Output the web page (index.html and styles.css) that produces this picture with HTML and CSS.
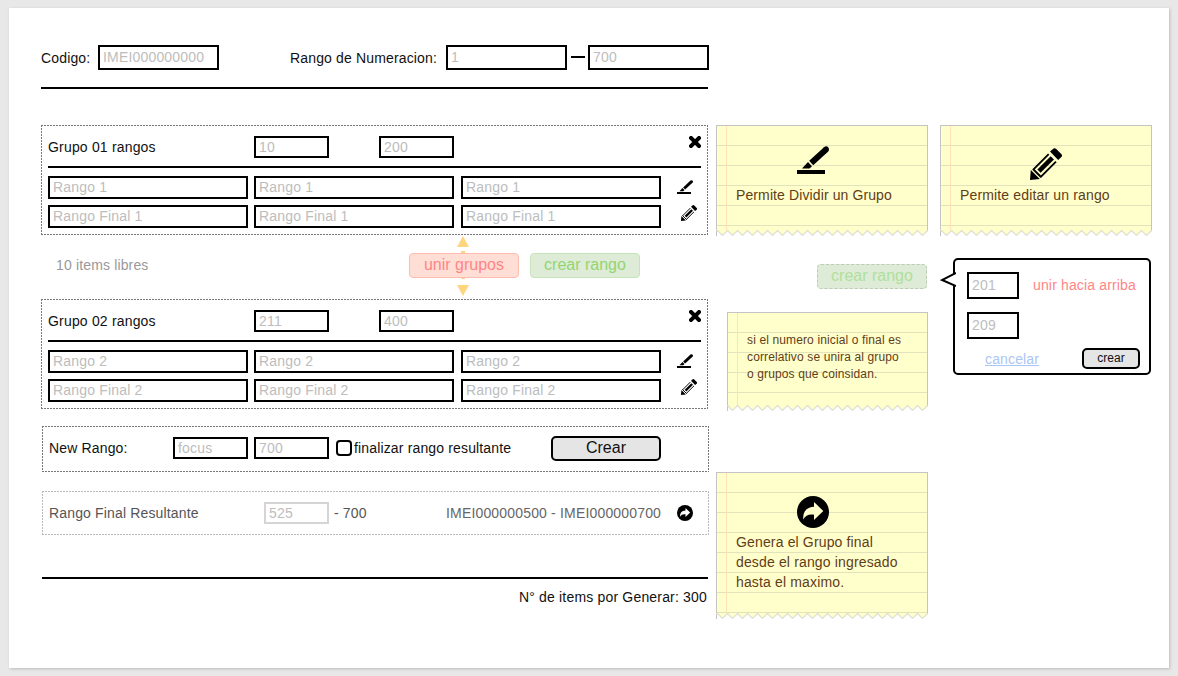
FILE: index.html
```html
<!DOCTYPE html>
<html lang="es">
<head>
<meta charset="utf-8">
<title>Rangos</title>
<link rel="stylesheet" href="styles.css">
</head>
<body>
<svg class="defs" width="0" height="0">
  <symbol id="times" viewBox="0 0 12 12"><path d="M2 2 10 10M10 2 2 10" stroke="#000" stroke-width="4" stroke-linecap="square"/></symbol>
  <symbol id="marker" viewBox="0 0 32 28"><path d="M0 24h28v4H0z"/><path d="M5 22.500 11 16l4 4.200-2.500 2.300z"/><path d="M12.200 14.800 27 1.200q2.600-1.800 4.300.200 1.500 2.200-.300 4.300L16.200 19.200z"/></symbol>
  <symbol id="pencil" viewBox="0 0 32 32"><path d="M0 32 .8 22 9.800 31z"/><path d="M20 3.500 23.500.500q1.300-.800 2.500.200l5.500 5.500q1 1.300.100 2.600L28.200 12z"/><path d="M3 21.800 18.700 6.100M10.300 29.300 26 13.600M3 21 11 29" stroke="#000" stroke-width="1.900"/><path d="M9 23.200 22.300 9.900" stroke="#000" stroke-width="4.600"/></symbol>
  <symbol id="share" viewBox="0 0 32 32"><circle cx="16" cy="16" r="16"/><path fill="currentColor" d="M17 6 26.300 15 17 24V18.700C11.500 18 8.500 19.500 6.300 23.500 5.500 16 9.500 11 17 10.800z"/></symbol>
  <pattern id="zig" x="1.500" y="0" width="10" height="6" patternUnits="userSpaceOnUse"><path class="paper" d="M0 0V.5l5 5 5-5V0z"/><path class="tear" d="M-1-.5 5 5.500 11-.5"/></pattern>
</svg>
<div class="page">
  <main class="main">
    <header class="top">
      <span class="label-code">Codigo:</span><span class="field tall">IMEI000000000</span>
      <span class="label-range">Rango de Numeracion:</span><span class="field tall">1</span><i class="dash"></i><span class="field tall">700</span>
    </header>

    <section class="group dashed">
      <div class="group-head"><span class="name">Grupo 01 rangos</span><span class="field">10</span><span class="field second">200</span><svg class="close"><use href="#times"/></svg></div>
      <div class="group-body">
        <span class="field">Rango 1</span><span class="field">Rango 1</span><span class="field">Rango 1</span><svg class="i-marker"><use href="#marker"/></svg>
        <span class="field">Rango Final 1</span><span class="field">Rango Final 1</span><span class="field">Rango Final 1</span><svg class="i-pencil"><use href="#pencil"/></svg>
      </div>
    </section>

    <div class="between">
      <span class="free">10 items libres</span>
      <span class="join"><svg class="arrow" viewBox="0 0 12 60"><path d="M6 0 12 11H0zM4 15h4v28H4zM0 49h12L6 60z"/></svg><span class="btn red">unir grupos</span></span>
      <span class="btn green">crear rango</span>
    </div>

    <section class="group dashed">
      <div class="group-head"><span class="name">Grupo 02 rangos</span><span class="field">211</span><span class="field second">400</span><svg class="close"><use href="#times"/></svg></div>
      <div class="group-body">
        <span class="field">Rango 2</span><span class="field">Rango 2</span><span class="field">Rango 2</span><svg class="i-marker"><use href="#marker"/></svg>
        <span class="field">Rango Final 2</span><span class="field">Rango Final 2</span><span class="field">Rango Final 2</span><svg class="i-pencil"><use href="#pencil"/></svg>
      </div>
    </section>

    <section class="new dashed">
      <span class="new-label">New Rango:</span><span class="field">focus</span><span class="field">700</span><i class="check"></i><span class="check-label">finalizar rango resultante</span><span class="btn dark">Crear</span>
    </section>

    <section class="result dashed">
      <span class="result-label">Rango Final Resultante</span><span class="field">525</span><span class="until">- 700</span><span class="codes">IMEI000000500 - IMEI000000700</span><svg class="i-share"><use href="#share"/></svg>
    </section>

    <footer class="total">N° de items por Generar: 300</footer>
  </main>

  <aside class="side">
    <div class="note n-split"><svg class="big b-marker"><use href="#marker"/></svg><p>Permite Dividir un Grupo</p><svg class="edge" viewBox="0 0 212 6"><rect width="212" height="6" fill="url(#zig)"/></svg></div>
    <span class="btn green faded">crear rango</span>
    <div class="note n-small"><p>si el numero inicial o final es<br>correlativo se unira al grupo<br>o grupos que coinsidan.</p><svg class="edge" viewBox="11 0 201 6"><rect width="212" height="6" fill="url(#zig)"/></svg></div>
    <div class="note n-share"><svg class="big b-share"><use href="#share"/></svg><p>Genera el Grupo final<br>desde el rango ingresado<br>hasta el maximo.</p><svg class="edge" viewBox="0 0 212 6"><rect width="212" height="6" fill="url(#zig)"/></svg></div>
  </aside>

  <aside class="side last">
    <div class="note n-edit"><svg class="big b-pencil"><use href="#pencil"/></svg><p>Permite editar un rango</p><svg class="edge" viewBox="0 0 212 6"><rect width="212" height="6" fill="url(#zig)"/></svg></div>
    <div class="popover">
      <svg class="beak" viewBox="0 0 16 16"><path d="M16 1 2 8 16 14"/></svg>
      <div class="pop-row"><span class="field">201</span><span class="up">unir hacia arriba</span></div>
      <div class="pop-row"><span class="field">209</span></div>
      <div class="pop-actions"><a class="cancel">cancelar</a><span class="btn dark mini">crear</span></div>
    </div>
  </aside>
</div>
</body>
</html>
```
FILE: styles.css
```css
* { box-sizing: border-box; }
body { margin: 0; padding: 8px 9px; height: 676px; overflow: hidden; background: #e8e8e8; font: 14px/20px "Liberation Sans", Arial, sans-serif; letter-spacing: .15px; color: #111; }
svg { display: block; flex: none; }
p { margin: 0; }
.defs { position: absolute; }
.paper { fill: #ffffcc; }
.tear { fill: none; stroke: #c4c4c4; }
.page { display: flex; width: 1160px; height: 660px; padding: 37px 0 0 32px; background: #fff; box-shadow: 1px 1px 3px #bbb; white-space: nowrap; }
.main { width: 668px; margin-right: 7px; }

.field { display: block; flex: none; width: 75px; height: 22px; padding-left: 3px; border: 2px solid #000; background: #fff; color: #bdbdbd; line-height: 18px; letter-spacing: .18px; }
.field.tall { width: 121px; height: 25px; line-height: 21px; }
.top { display: flex; width: 667px; height: 44px; border-bottom: 2px solid #000; line-height: 26px; }
.top .tall:last-child { margin-right: -1px; }
.label-code { width: 57px; }
.label-range { width: 156px; margin-left: 71px; }
.dash { flex: none; width: 14px; height: 2px; margin: 11px 3px 0 4px; background: #000; }

.dashed {
  --c: #777;
  background:
    repeating-linear-gradient(90deg, var(--c) 0 2px, transparent 2px 3px) top / 100% 1px no-repeat,
    repeating-linear-gradient(90deg, var(--c) 0 2px, transparent 2px 3px) bottom / 100% 1px no-repeat,
    repeating-linear-gradient(var(--c) 0 2px, transparent 2px 3px) left / 1px 100% no-repeat,
    repeating-linear-gradient(var(--c) 0 2px, transparent 2px 3px) right / 1px 100% no-repeat;
}
.group { width: 667px; height: 110px; padding: 11px 7px 0; }
.top + .group { margin-top: 36px; }
.group-head { display: flex; height: 32px; border-bottom: 2px solid #000; }
.name { width: 206px; line-height: 22px; letter-spacing: .18px; }
.second { margin-left: 50px; }
.close { width: 12px; height: 12px; margin-left: auto; }
.group-body { display: grid; grid-template-columns: 206px 207px 200px 40px; row-gap: 6px; margin-top: 8px; }
.group-body .field { width: 200px; height: 23px; line-height: 19px; }
.i-marker { width: 16px; height: 14px; margin: 4px 0 0 16px; }
.i-pencil { width: 16px; height: 16px; margin-left: 20px; }

.between { display: flex; height: 64px; padding: 18px 0 0 15px; }
.free { width: 353px; line-height: 25px; color: #999; }
.join { position: relative; margin-right: 11px; }
.arrow { position: absolute; left: 48px; top: -17px; width: 12px; height: 60px; fill: #ffd580; }
.btn { display: block; position: relative; width: 110px; height: 25px; border: 1px solid; border-radius: 4px; text-align: center; font-size: 16px; line-height: 22px; letter-spacing: 0; }
.red { background: #ffded6; border-color: #ffbdb0; color: #ff8585; }
.green { background: #deecd7; border-color: #c6e4b9; color: #93d572; }

.new { display: flex; width: 667px; height: 46px; margin: 17px 0 0 1px; padding: 11px 7px 0; line-height: 22px; }
.new-label { width: 124px; }
.new .field + .field { margin-left: 6px; }
.check { flex: none; width: 16px; height: 16px; margin: 3px 2px 0 7px; border: 2px solid #000; border-radius: 4px; }
.check-label { width: 197px; }
.dark { margin-top: -1px; background: #e5e5e5; border: 2px solid #000; border-radius: 5px; color: #111; line-height: 20px; }
.result { --c: #bbb; display: flex; width: 667px; height: 44px; margin: 19px 0 0 1px; padding: 11px 7px 0; line-height: 22px; color: #555; }
.result-label { width: 215px; }
.result .field { width: 65px; border-color: #d5d5d5; }
.until { width: 117px; padding-left: 5px; }
.codes { width: 231px; color: #666; letter-spacing: .17px; }
.i-share { width: 16px; height: 16px; margin-top: 3px; color: #fff; }
.total { width: 666px; margin: 42px 0 0 1px; padding: 8px 1px 0 0; border-top: 2px solid #000; text-align: right; letter-spacing: .18px; }

.side { width: 212px; padding-top: 80px; }
.last { margin-left: 12px; }
.note {
  position: relative; height: 106px; padding-left: 19px; border: 1px solid #c4c4c4; border-bottom: 0; color: #5f3d17;
  background:
    linear-gradient(90deg, transparent 9px, #ffe1b5 9px 10px, transparent 10px),
    repeating-linear-gradient(transparent 0 19px, #e2e2bd 19px 20px), #ffffcc;
}
.edge { position: absolute; left: -1px; top: 100%; margin-top: -1px; width: 212px; height: 6px; background: #fff; }
.n-small .edge { width: 201px; }
.note::after { content: ""; position: absolute; left: -1px; top: 100%; width: 1px; height: 5px; background: #c4c4c4; }
.big { width: 32px; height: 32px; margin-left: 61px; }
.b-marker { height: 28px; margin-top: 20px; }
.b-marker + p { margin-top: 11px; letter-spacing: .11px; }
.b-pencil { margin: 22px 0 5px 70px; }
.b-share { margin-top: 23px; margin-bottom: 4px; color: #ffffcc; }
.faded { margin: 33px 0 0 101px; border-style: dashed; border-color: #bdcbb6; color: #b0df9c; }
.n-small { width: 201px; height: 94px; margin: 23px 0 0 11px; padding-top: 19px; font-size: 12px; line-height: 17px; letter-spacing: .13px; }
.n-share { height: 142px; margin-top: 66px; }

.popover { position: relative; width: 198px; height: 117px; margin: 27px 0 0 13px; padding: 12px 0 0 12px; border: 2px solid #000; border-radius: 5px; background: #fff; }
.beak { position: absolute; left: -15px; top: 12px; width: 16px; height: 16px; fill: #fff; stroke: #000; stroke-width: 2; }
.pop-row { display: flex; height: 27px; margin-bottom: 13px; line-height: 26px; }
.pop-row .field { width: 52px; height: 27px; line-height: 23px; }
.up { margin-left: 14px; color: #ff8585; }
.pop-actions { display: flex; margin-top: -4px; padding-left: 18px; }
.cancel { width: 97px; margin-top: 1px; color: #abc5f5; text-decoration: underline; }
.mini { width: 58px; height: 21px; margin-top: 0; font-size: 12px; line-height: 16px; }
```
